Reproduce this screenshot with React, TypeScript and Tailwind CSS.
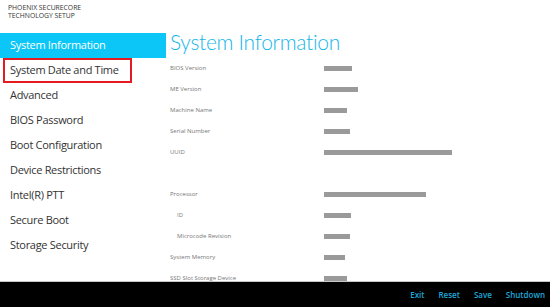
const navItems = [
  "System Information",
  "System Date and Time",
  "Advanced",
  "BIOS Password",
  "Boot Configuration",
  "Device Restrictions",
  "Intel(R) PTT",
  "Secure Boot",
  "Storage Security",
];

type Row = { label: string; bar?: number; indent?: boolean };

const rows: Row[] = [
  { label: "BIOS Version", bar: 28 },
  { label: "ME Version", bar: 34 },
  { label: "Machine Name", bar: 23 },
  { label: "Serial Number", bar: 26 },
  { label: "UUID", bar: 128 },
  { label: "" },
  { label: "Processor", bar: 102 },
  { label: "ID", bar: 27, indent: true },
  { label: "Microcode Revision", bar: 26, indent: true },
  { label: "System Memory", bar: 21 },
  { label: "SSD Slot Storage Device", bar: 23 },
];

export default function App() {
  return (
    <div className="w-[550px] h-[307px] bg-white flex flex-col overflow-hidden font-['Open_Sans',sans-serif]">
      <div className="flex flex-1 min-h-0">
        {/* left menu */}
        <div className="w-[166px] flex-shrink-0">
          <div className="h-[33px] pt-[4px] pl-[8px] text-[6.8px] leading-[8px] text-[#333] uppercase">
            <div>Phoenix SecureCore</div>
            <div>Technology Setup</div>
          </div>
          <ul className="text-[11px] tracking-[-0.3px]">
            {navItems.map((item, i) => (
              <li
                key={item}
                className={`relative h-[25px] flex items-center pl-[10px] ${
                  i === 0 ? "bg-[#0cc6f7] text-white" : "text-[#333]"
                }`}
              >
                {item}
                {i === 1 && (
                  <span className="absolute left-[3px] top-[0px] w-[129px] h-[25px] border-2 border-[#e31b23]" />
                )}
              </li>
            ))}
          </ul>
        </div>

        {/* content */}
        <div className="flex-1 pl-[4px] overflow-hidden">
          <div className="h-[58px] pt-[29px] font-['Lato',sans-serif] font-light text-[21px] tracking-[-0.3px] leading-[26px] text-[#14b6ea]">
            System Information
          </div>
          {rows.map((r, i) => (
            <div key={i} className="h-[21px] flex items-center">
              <div
                className={`w-[154px] text-[6px] text-[#777] ${r.indent ? "pl-[7px]" : ""}`}
              >
                {r.label}
              </div>
              {r.bar && (
                <div className="h-[5px] bg-[#9a9a9a]" style={{ width: r.bar }} />
              )}
            </div>
          ))}
        </div>
      </div>

      {/* footer */}
      <div className="h-[26px] flex-shrink-0 bg-black border-t border-[#c8c8c8] flex items-center justify-end pr-[5px] gap-[14px] text-[8px] font-semibold text-[#1ea8d8]">
        <span>Exit</span>
        <span>Reset</span>
        <span>Save</span>
        <span>Shutdown</span>
      </div>
    </div>
  );
}
